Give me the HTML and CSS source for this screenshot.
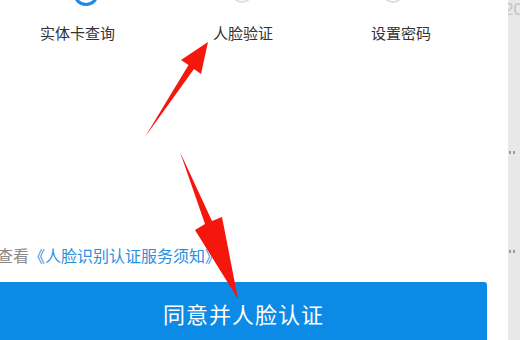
FILE: index.html
```html
<!DOCTYPE html>
<html lang="zh-CN">
<head>
  <meta charset="UTF-8">
  <title>人脸验证</title>
  <link rel="stylesheet" href="styles.css">
</head>
<body>
  <div class="page">
    <div class="main">
      <div class="steps">
        <span class="dot dot-active"></span>
        <span class="dot dot-2"></span>
        <span class="dot dot-3"></span>
      </div>
      <div class="labels">
        <span class="label">实体卡查询</span>
        <span class="label">人脸验证</span>
        <span class="label">设置密码</span>
      </div>
      <p class="notice">查看<a href="#">《人脸识别认证服务须知》</a></p>
      <button class="submit">同意并人脸认证</button>
    </div>
    <div class="side">
      <span class="side-num">20</span>
      <span class="side-dots dots-1"><i></i><i></i></span>
      <span class="side-dots dots-2"><i></i><i></i></span>
    </div>

    <!-- annotation arrows -->
    <svg class="arrows" width="520" height="340" viewBox="0 0 520 340">
      <polygon points="145,137 188.5,65 181,60 208,42 201,74 194,69" />
      <polygon points="180,152 205,224 195,230 238,299 222,217 212,221" />
    </svg>
  </div>
</body>
</html>
```

FILE: styles.css
```css
html, body {
  margin: 0;
  padding: 0;
}
body {
  width: 520px;
  height: 340px;
  overflow: hidden;
  background: #fff;
  font-family: "Noto Sans CJK SC", "Noto Sans", sans-serif;
}
.page {
  position: relative;
  display: flex;
  width: 520px;
  height: 340px;
}
.main {
  width: 508px;
  flex: none;
  background: #fff;
}
.steps {
  display: flex;
  align-items: flex-start;
  margin-top: -20px;
  height: 26px;
}
.dot {
  box-sizing: border-box;
  border-radius: 50%;
  flex: none;
}
.dot-active {
  width: 26px;
  height: 26px;
  margin-left: 73px;
  border: 3px solid #1a8ae6;
}
.dot-2, .dot-3 {
  width: 22px;
  height: 22px;
  margin-top: 1px;
  border: 2px solid #dedede;
}
.dot-2 {
  margin-left: 132px;
}
.dot-3 {
  margin-left: 129px;
}
.labels {
  display: flex;
  gap: 98px;
  padding-left: 40px;
  margin-top: 17px;
  font-size: 15px;
  line-height: 20px;
  color: #333;
}
.notice {
  margin: 200px 0 0;
  text-indent: -3px;
  font-size: 16px;
  line-height: 24px;
  color: #8a8a8a;
}
.notice a {
  color: #2b8fe0;
  text-decoration: none;
}
.submit {
  display: block;
  width: 487px;
  height: 62px;
  margin-top: 15px;
  padding: 0;
  border: none;
  border-radius: 0 3px 0 0;
  background: #0b8ae6;
  color: #fff;
  font-family: inherit;
  font-size: 22px;
  letter-spacing: 1px;
  line-height: 62px;
  text-align: center;
}
.side {
  flex: 1;
  position: relative;
  background: #e8e8e8;
  overflow: hidden;
}
.side-num {
  position: absolute;
  top: 0;
  left: -4px;
  font-family: "Liberation Sans", sans-serif;
  font-size: 17px;
  line-height: 20px;
  color: #c4c4c4;
  white-space: nowrap;
}
.side-dots {
  position: absolute;
  left: 1px;
  display: flex;
  gap: 2px;
}
.side-dots i {
  width: 2px;
  height: 3px;
  background: #9a98b0;
}
.dots-1 {
  top: 151px;
}
.dots-2 {
  top: 250px;
}
.arrows {
  position: absolute;
  left: 0;
  top: 0;
  pointer-events: none;
}
.arrows polygon {
  fill: #f5160c;
}
```
